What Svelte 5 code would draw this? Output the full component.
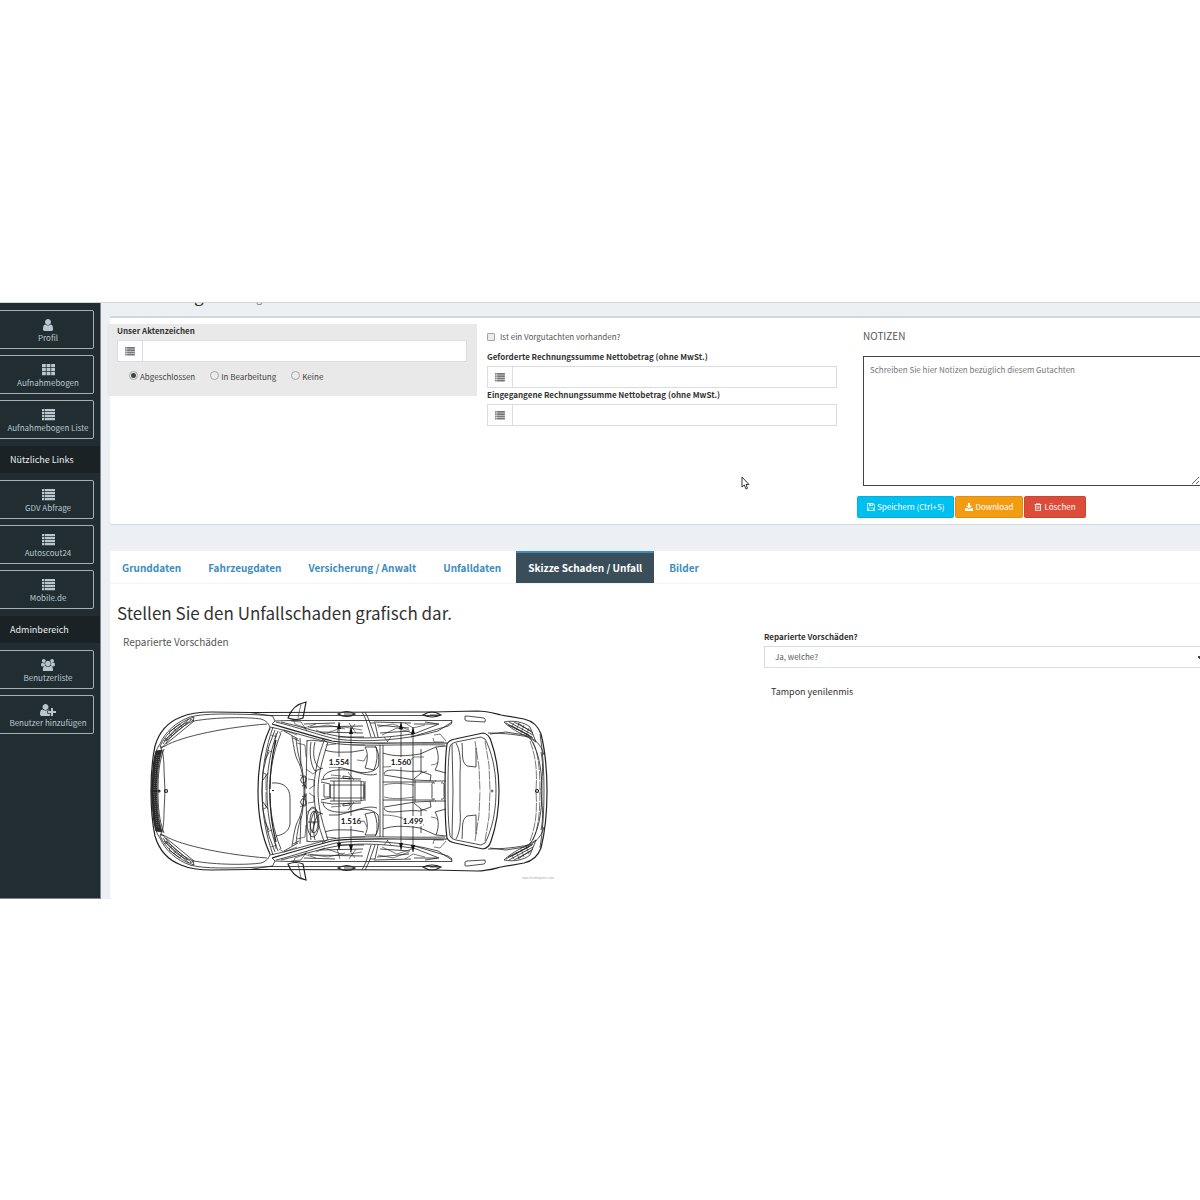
<script>
  let status = $state('done');
  let active = $state('Skizze Schaden / Unfall');

  const groups = [
    {
      title: '',
      items: [
        { icon: 'user', label: 'Profil' },
        { icon: 'grid', label: 'Aufnahmebogen' },
        { icon: 'list', label: 'Aufnahmebogen Liste' }
      ]
    },
    {
      title: 'Nützliche Links',
      items: [
        { icon: 'list', label: 'GDV Abfrage' },
        { icon: 'list', label: 'Autoscout24' },
        { icon: 'list', label: 'Mobile.de' }
      ]
    },
    {
      title: 'Adminbereich',
      items: [
        { icon: 'users', label: 'Benutzerliste' },
        { icon: 'plus', label: 'Benutzer hinzufügen' }
      ]
    }
  ];

  const tabs = [
    'Grunddaten',
    'Fahrzeugdaten',
    'Versicherung / Anwalt',
    'Unfalldaten',
    'Skizze Schaden / Unfall',
    'Bilder'
  ];

  const measures = [
    { x: 339, top: 722, bottom: 850, text: '1.554', y: 762 },
    { x: 351, top: 727, bottom: 852, text: '1.516', y: 821 },
    { x: 401, top: 722, bottom: 850, text: '1.560', y: 762 },
    { x: 413, top: 727, bottom: 852, text: '1.499', y: 821 }
  ];
</script>

{#snippet icon(name)}
  {#if name === 'user'}
    <svg class="icon" viewBox="0 128 1280 1536" aria-hidden="true"><path d="M1280 1399q0 109-62.500 187t-150.500 78h-854q-88 0-150.500-78t-62.500-187q0-85 8.500-160.500t31.500-152t58.500-131t94-89t134.500-34.500q131 128 313 128t313-128q76 0 134.500 34.500t94 89t58.500 131t31.500 152t8.500 160.500zM1024 512q0 159-112.500 271.500t-271.500 112.500t-271.500-112.500t-112.500-271.500t112.500-271.500t271.500-112.500t271.500 112.500t112.500 271.500z" /></svg>
  {:else if name === 'users'}
    <svg class="icon" viewBox="0 0 1920 1664" aria-hidden="true"><path d="M593 896q-162 5-265 128h-134q-82 0-138-40.500t-56-118.500q0-353 124-353 6 0 43.500 21t97.500 42.500 119 21.500q67 0 133-23-5 37-5 66 0 159 93 293zm1071 637q0 120-73 189.500t-194 69.500h-874q-121 0-194-69.500t-73-189.500q0-53 3.500-103.500t14-109 26.500-108.500 43-97.500 62-81 85.500-53.500 111.500-20q10 0 43 21.500t73 48 107 48 135 21.500 135-21.500 107-48 73-48 43-21.500q61 0 111.500 20t85.500 53.500 62 81 43 97.500 26.500 108.500 14 109 3.500 103.500zm-1024-1277q0 106-75 181t-181 75-181-75-75-181 75-181 181-75 181 75 75 181zm704 384q0 159-112.500 271.500t-271.500 112.500-271.500-112.500-112.500-271.500 112.500-271.500 271.500-112.500 271.500 112.500 112.500 271.500zm576 225q0 78-56 118.500t-138 40.500h-134q-103-123-265-128 93-134 93-293 0-29-5-66 66 23 133 23 59 0 119-21.500t97.500-42.500 43.500-21q124 0 124 353zm-128-609q0 106-75 181t-181 75-181-75-75-181 75-181 181-75 181 75 75 181z" /></svg>
  {:else if name === 'plus'}
    <svg class="icon" viewBox="0 128 2048 1536" aria-hidden="true"><path d="M704 896q-159 0-271.500-112.500t-112.500-271.500 112.500-271.500 271.500-112.500 271.500 112.500 112.500 271.500-112.500 271.500-271.500 112.500zm960 128h352q13 0 22.500 9.500t9.500 22.500v192q0 13-9.500 22.500t-22.500 9.500h-352v352q0 13-9.500 22.500t-22.500 9.500h-192q-13 0-22.500-9.500t-9.500-22.500v-352h-352q-13 0-22.500-9.500t-9.500-22.500v-192q0-13 9.500-22.500t22.500-9.500h352v-352q0-13 9.500-22.500t22.500-9.500h192q13 0 22.500 9.500t9.500 22.500v352zm-736 224q0 52 38 90t90 38h256v238q-68 50-171 50h-874q-121 0-194-69t-73-190q0-53 3.500-103.500t14-109 26.500-108.500 43-97.500 62-81 85.500-53.500 111.500-20q19 0 39 17 79 61 154.500 91.500t164.500 30.500 164.500-30.500 154.500-91.500q20-17 39-17 132 0 217 96h-223q-52 0-90 38t-38 90v192z" /></svg>
  {:else if name === 'grid'}
    <svg class="icon" viewBox="0 0 13 12" aria-hidden="true"><path d="M0 0h3.800v3.200H0zM4.600 0h3.800v3.200H4.600zM9.200 0H13v3.200H9.200zM0 4h3.800v3.200H0zM4.600 4h3.800v3.200H4.600zM9.200 4H13v3.200H9.200zM0 8h3.800v3.200H0zM4.600 8h3.800v3.200H4.600zM9.200 8H13v3.200H9.200z" /></svg>
  {:else if name === 'list'}
    <svg class="icon" viewBox="0 0 13 12" aria-hidden="true"><path d="M0 0h2v2.300H0zM2.600 0H13v2.300H2.600zM0 3h2v2.300H0zM2.600 3H13v2.300H2.600zM0 6h2v2.300H0zM2.600 6H13v2.300H2.600zM0 9h2v2.300H0zM2.600 9H13v2.300H2.600z" /></svg>
  {:else if name === 'save'}
    <svg class="icon" viewBox="0 0 12 12" aria-hidden="true"><path fill-rule="evenodd" d="M0 0h9l3 3v9H0zM1 1v10h1V7h8v4h1V3.500L8.500 1v3.500H3V1zM3 8v3h6V8zM5.500 1v2.500h1.700V1z" /></svg>
  {:else if name === 'download'}
    <svg class="icon" viewBox="0 0 12 12" aria-hidden="true"><path d="M4.500 0h3v4H10.500L6 8.500 1.500 4H4.500zM0 8h3.500L6 10.300 8.500 8H12v4H0z" /></svg>
  {:else}
    <svg class="icon" viewBox="0 0 12 12" aria-hidden="true"><path fill-rule="evenodd" d="M4 0h4l.6 1.600H11v1.200h-.8V12H1.800V2.800H1V1.600h2.400zM4.600.9 4.300 1.600h3.400L7.400.9zM3 3v7.800h6V3zM4 4h.8v5.500H4zM5.600 4h.8v5.500h-.8zM7.200 4H8v5.500h-.8z" /></svg>
  {/if}
{/snippet}

{#snippet halfCar()}
  <!-- body shell -->
  <path class="bold" d="M151 791C151 775 152 760 155 746C159 732 168 722 181 717C190 713 199 712 212 712L250 712.500L433 712L477 711C487 711 493 713 501 715L524 719C533 721 538 726 541 734C545 750 547 770 547 791" />
  <path d="M153 768C154 757 156 749 160 744C165 732 176 722 190 717C204 713 232 714 250 714.500L272 715.500L440 715.500" />
  <path d="M164 749C159 762 158 775 158 791M161 748C163 751 164 760 164 770L165 791M160 748L165 746M540 734C543 752 544 772 544 791" />
  <!-- bonnet -->
  <path d="M165 746C182 736 228 727 267 724M194 721C216 717 248 717 261 719C267 721 269 724 270 728M190 719L194 721L166 744M250 712.500L262 714.500L272 716" />
  <!-- head lamp -->
  <path d="M160 747C163 738 174 724 194 717L193 721C181 726 170 737 163 747ZM164 741L189 719M166 741L191 720M163 744C170 733 177 727 188 722M169 732L180 724" />
  <path class="thin" d="M165 738L168 740M169 733L172 736M174 728L176 731M180 724L182 727" />
  <!-- grille -->
  <path class="grille" d="M151.500 791C152 776 153 763 156 751L162 750C158 763 157 776 157 791Z" />
  <path class="slats" d="M154 790L157 754M156 790L159 754" />
  <!-- windscreen -->
  <path class="bold" d="M270 728C261 747 258 770 258 791" />
  <path d="M273 727C266 747 262 769 262 791M278 731C270 750 267 771 267 791M281 733C273 752 270 772 269.500 791M262 791L263 772L269 746L275 730M265 760L269 752M263 780L268 773" />
  <path class="bold" d="M276 740C272 755 270 768 270 789" />
  <path class="thin" d="M279 733L284 730L297 735M266 790V774L263 773M271 735L277 737M267 750L272 752M276 733L274 747" />
  <!-- pillar and roof rail -->
  <path class="bold" d="M272 724C289 729 316 737 332 741C356 745 402 742 447 743" />
  <path d="M270 727C290 731 314 739 332 743C356 747 402 744 445 745M276 722C297 727 318 735 336 739C366 743 405 740 438 731L452 722M281 722C300 726 318 733 337 736C362 740 392 737 412 734" />
  <path d="M272 715L275 721L289 720.500L452 720.500Q453 724 448 726L411 737M275 721L272 724" />
  <!-- mirror -->
  <path class="bold" d="M288 718C291 709 296 704 306 702L303 718Q296 721 288 718Z" />
  <path class="thin" d="M301 704L298 718M293 719L295 724L306 728M291 721L301 722L307 731" />
  <!-- doors and windows -->
  <path d="M362 712L366 720L371 737M365 712L369 720L375 737M304 724L335 723M310 727L363 726M320 732L363 733M374 722L411 723M377 725L409 728M380 733L410 731M370 723L375 723L378 737M425 722L439 724L411 735M414 724L437 724M338 737L364 737" />
  <path class="thin" d="M308 728L328 725L345 729M327 733L344 727L362 730M378 727L393 724L409 730M382 735L397 728L412 733M340 723L337 733M349 723L356 733M355 724L350 731M405 723L413 728L425 725M384 737L388 742M391 737L387 742M316 730L325 734M304 728L316 724" />
  <path class="bold" d="M338 714Q347 709 355 714Q347 719 338 714ZM423 715Q432 709 441 715Q432 719 423 715Z" />
  <path d="M344 714H353M430 715H439M465 717Q464 716 467 716L484 718Q486 719 485 722L467 721Q464 721 465 717Z" />
  <!-- dashboard -->
  <path d="M284 731L291 735L298 739M292 736C294 748 295 757 299 763C302 770 304 781 304 791M296 738C297 750 299 759 302 767L305 791M300 738L301 766M307 741C313 739 320 742 323 741M311 742C309 754 311 766 315 771L323 768M315 742C312 754 314 765 321 769M322 739L327 742M293 738L299 741M307 740L306 789" />
  <path class="thin" d="M297 743L305 745L306 757M306 769L313 774L317 771M308 779L314 780V786M309 789L315 785M300 775L306 778L305 787" />
  <path d="M302 777Q306 774 306 779T302 783Q299 780 302 777ZM302 786Q306 783 306 788" />
  <!-- front seats -->
  <path d="M328 742C323 758 318 773 318 791M324 741C319 754 314 772 314 791M325 750C333 753 340 752 352 752L364 750M329 767L338 767L354 771C363 774 373 773 378 767C380 757 378 750 375 746M323 779C324 771 335 769 348 770C358 772 368 777 377 774M365 747C369 754 367 763 365 768L374 770Q379 758 376 747Z" />
  <path d="M321 780L332 778L361 779M365 781V791M361 782Q364 780 364 784V791M330 781H361V791M343 776L350 777V779L343 778ZM334 781V791M321 782L330 784V791" />
  <path class="thin" d="M326 745L336 744M352 745L365 745M357 760L364 761L367 755M331 775L341 776M348 772L354 780" />
  <!-- rear bench -->
  <path d="M380 745V791M383 745V791M383 753C394 757 407 756 420 754L436 747L446 746M436 747C440 757 438 765 435 770L446 773M384 774C386 766 404 773 420 771L431 775L430 781M384 775L415 780L436 781M383 782L434 782M414 779L421 773V749M415 780V791M435 783Q431 782 432 786V791M441 783Q445 782 444 787V791M435 781H446" />
  <path class="thin" d="M383 767C396 767 409 763 414 757L424 757M421 773L427 771M384 785C395 782 406 784 414 785M431 765Q436 765 438 762M434 735L440 734L446 741M433 738L434 742L444 742" />
  <!-- rear window -->
  <path class="bold" d="M445 791C445 775 445 758 447 744Q449 740 455 739L483 733Q489 734 491 741C497 758 499 775 499 791" />
  <path d="M448 791C448 775 448 759 450 746Q451 743 456 742L481 737Q486 738 487 743C494 759 496 776 496 791M452 744L453 791M456 743C460 750 461 760 460 773V791M462 743C463 754 461 762 467 766L476 767V748" />
  <path class="thin" stroke-dasharray="9 1" d="M475 741L479 767L480 791M485 741L489 765L490 791" />
  <!-- boot -->
  <path d="M488 733C505 733 518 735 529 737C538 748 542 768 542 791M490 734L506 732L525 735C535 739 541 744 544 755M541 752C544 766 542 778 541 791" />
  <path class="thin" stroke-dasharray="9 1" d="M530 741C537 760 537 775 536 791M533 742C539 756 540 772 540 791" />
  <path d="M504 722C513 720 524 722 530 727L536 742C527 736 513 731 504 722ZM506 723L533 738M509 722L533 735M514 722L531 731M512 726L532 737M518 723L533 733M508 725L529 735" />
  <path class="thin" d="M514 723L511 727M519 724L516 730M524 725L521 733M529 728L526 736" />
{/snippet}

<div class="screen">
  <aside class="sidebar">
    {#each groups as group}
      {#if group.title}<h2>{group.title}</h2>{/if}
      <nav class="group" aria-label={group.title || 'Aufnahme'}>
        {#each group.items as item}
          <a class="tile" href="#top">{@render icon(item.icon)}<span>{item.label}</span></a>
        {/each}
      </nav>
    {/each}
  </aside>

  <main>
    <header><span class="big">g</span><span class="small">g</span></header>

    <section class="panel summary">
      <div class="columns">
        <div class="col file">
          <label class="title" for="file-no">Unser Aktenzeichen</label>
          <div class="field"><span>{@render icon('list')}</span><input id="file-no" type="text" /></div>
          <div class="choices">
            <label><input type="radio" name="status" value="done" bind:group={status} />Abgeschlossen</label>
            <label><input type="radio" name="status" value="open" bind:group={status} />In Bearbeitung</label>
            <label><input type="radio" name="status" value="none" bind:group={status} />Keine</label>
          </div>
        </div>

        <div class="col sums">
          <label class="check"><input type="checkbox" />Ist ein Vorgutachten vorhanden?</label>
          <label class="title" for="claimed">Geforderte Rechnungssumme Nettobetrag (ohne MwSt.)</label>
          <div class="field"><span>{@render icon('list')}</span><input id="claimed" type="text" /></div>
          <label class="title" for="received">Eingegangene Rechnungssumme Nettobetrag (ohne MwSt.)</label>
          <div class="field"><span>{@render icon('list')}</span><input id="received" type="text" /></div>
        </div>

        <div class="col notes">
          <label for="notes">NOTIZEN</label>
          <textarea id="notes" placeholder="Schreiben Sie hier Notizen bezüglich diesem Gutachten"></textarea>
          <div class="actions">
            <button class="save">{@render icon('save')}Speichern (Ctrl+S)</button>
            <button class="load">{@render icon('download')}Download</button>
            <button class="drop">{@render icon('trash')}Löschen</button>
          </div>
        </div>
      </div>

      <svg class="pointer" viewBox="0 0 9 14" aria-hidden="true"><path d="M1 1V11L3.300 9L5 13L6.500 12.300L5 8.500H8Z" /></svg>
    </section>

    <section class="panel">
      <nav class="tabs" aria-label="Gutachten">
        {#each tabs as tab}
          <a href="#top" class:active={tab === active} onclick={() => (active = tab)}>{tab}</a>
        {/each}
      </nav>
      <div class="sketch">
        <div class="drawing">
          <h1>Stellen Sie den Unfallschaden grafisch dar.</h1>
          <p>Reparierte Vorschäden</p>
          <svg class="car" viewBox="150 697 406 188" role="img" aria-label="Fahrzeug von oben">
            {@render halfCar()}
            <g transform="matrix(1 0 0 -1 0 1582)">{@render halfCar()}</g>
            <!-- steering wheel and instruments -->
            <ellipse cx="313" cy="822" rx="6" ry="15" />
            <ellipse cx="314" cy="822" rx="4" ry="11" />
            <path d="M308 822H318M314 811L315 821L312 833M272 783C284 782 290 788 290 798V824C289 832 282 835 276 836M324 784V797H329M330 785H364V798H330Z" />
            <circle cx="314" cy="823" r="1" />
            <!-- badges -->
            <circle class="bold" cx="166" cy="791" r="1.500" />
            <circle class="bold" cx="159" cy="791" r="1" />
            <circle cx="492" cy="791" r="1" />
            <circle class="bold" cx="537" cy="791" r="1.500" />
            <path class="dot" d="M272 790.500H274" />
            {#each measures as m}
              <path class="measure" d="M{m.x} {m.top}V{m.bottom}" />
              <path class="tip" d="M{m.x} {m.top}l-2 7h4zM{m.x} {m.bottom}l-2 -7h4z" />
            {/each}
            {#each measures as m}
              <rect class="mask" x={m.x - 10} y={m.y - 5} width="20" height="10" />
              <text class="value" x={m.x} y={m.y + 3}>{m.text}</text>
            {/each}
            <text class="source" x="522" y="879">www.the-blueprints.com</text>
          </svg>
        </div>
        <div class="details">
          <label class="title" for="damage">Reparierte Vorschäden?</label>
          <select id="damage"><option>Ja, welche?</option></select>
          <p>Tampon yenilenmis</p>
        </div>
      </div>
    </section>
  </main>
</div>

<style>
  :global(body) {
    background: #fff;
    font-family: 'Noto Sans CJK SC', 'Noto Sans', sans-serif;
    font-size: 8px;
    line-height: 12px;
    color: #444;
  }
  :global(#app) { padding: 302px 0; }
  * { box-sizing: border-box; }
  h1, h2, p { margin: 0; font-weight: 400; }
  input, textarea, select, button { font: inherit; margin: 0; }
  .icon { display: block; fill: currentColor; }

  .screen {
    display: flex;
    overflow: hidden;
    border-top: 1px solid #d5d6d8;
    background: #ecf0f5;
  }

  .sidebar {
    flex: none;
    width: 101px;
    background: #222d32;
    border-right: 1px solid #7f878d;
    border-bottom: 1px solid #7f878d;
  }
  .sidebar h2 {
    padding-left: 10px;
    background: #1a2226;
    color: #e8eef0;
    font-size: 9px;
    line-height: 27px;
  }
  .group {
    display: grid;
    gap: 6px;
    padding: 7px 6px 7px 0;
  }
  .tile {
    display: flex;
    flex-direction: column;
    align-items: center;
    gap: 1px;
    height: 39px;
    margin-left: -4px;
    padding: 8px 0 0 6px;
    border: 1px solid #a5b0b4;
    border-radius: 2px;
    color: #b8c7ce;
    text-decoration: none;
    white-space: nowrap;
  }
  .tile .icon { height: 12px; }

  main { flex: 1; min-width: 0; overflow: hidden; padding-left: 9px; }

  header {
    display: flex;
    align-items: flex-end;
    height: 13px;
    padding: 0 0 11px 84px;
    overflow: hidden;
    color: #333;
  }
  header .big { font-size: 17px; line-height: 21px; width: 62px; }
  header .small { font-size: 11px; line-height: 16px; color: #777; }

  .panel {
    margin-bottom: 27px;
    border-radius: 2px 0 0 2px;
    background: #fff;
    box-shadow: 0 1px 1px rgba(0, 0, 0, 0.1);
  }
  .panel:last-child { margin-bottom: 0; }
  .summary {
    position: relative;
    padding-top: 6px;
    border-top: 2px solid #d2d6de;
  }
  .columns {
    display: grid;
    grid-template-columns: repeat(3, 1fr);
    align-items: start;
    margin: 0 -17px 0 -3px;
  }
  .col { padding: 0 10px; min-width: 0; }
  .title { display: block; font-weight: 700; color: #333; }

  .file { height: 72px; background: #e9e9e9; }
  .file .title { padding: 1px 0 3px; }
  .field {
    display: flex;
    height: 22px;
    border: 1px solid #d9dce3;
    background: #fff;
  }
  .field span {
    display: grid;
    place-items: center;
    width: 25px;
    border-right: 1px solid #d9dce3;
    color: #777;
  }
  .field .icon { width: 10px; height: 9px; }
  .field input { flex: 1; min-width: 0; padding: 0 8px; border: 0; background: none; }
  .choices { display: flex; gap: 15px; padding: 9px 0 0 12px; }
  .choices label { display: flex; gap: 2px; }
  input[type='radio'], input[type='checkbox'] {
    appearance: none;
    flex: none;
    width: 9px;
    height: 9px;
    border: 1px solid #a5a5a5;
    background: #ececec;
  }
  input[type='radio'] { border-radius: 50%; }
  input[type='radio']:checked { background: radial-gradient(circle, #444 0 2px, #ececec 3px); }
  input[type='checkbox'] { width: 8px; height: 8px; border-radius: 1px; }

  .sums .title { padding-bottom: 2px; line-height: 14px; }
  .check { display: flex; align-items: center; gap: 5px; height: 26px; color: #555; }

  .notes { padding: 0 16px; }
  .notes label { display: block; font-size: 10px; line-height: 24px; color: #555; }
  .notes textarea {
    display: block;
    width: 100%;
    height: 130px;
    margin-top: 8px;
    padding: 7px 6px;
    border: 1px solid #444;
    background: #fff;
  }
  .notes textarea::placeholder { color: #777; }
  .actions { display: flex; gap: 1px; margin: 10px 0 6px -6px; }
  .actions button {
    display: flex;
    align-items: center;
    gap: 2px;
    height: 22px;
    padding: 0 9px;
    border: 1px solid rgba(0, 0, 0, 0.08);
    border-radius: 2px;
    color: #fff;
    white-space: nowrap;
  }
  .actions .icon { width: 8px; height: 8px; }
  .save { background: #00c0ef; }
  .load { background: #f39c12; }
  .drop { background: #dd4b39; }

  .pointer { position: absolute; left: 631px; top: 158px; width: 9px; height: 14px; fill: #fff; stroke: #333; }

  .tabs { display: flex; gap: 3px; border-bottom: 1px solid #f4f4f4; }
  .tabs a {
    padding: 0 12px;
    border-top: 2px solid transparent;
    color: #3c8dbc;
    font-size: 10px;
    font-weight: 700;
    line-height: 30px;
    text-decoration: none;
    white-space: nowrap;
  }
  .tabs a.active { border-color: #3c8dbc; background: #3a4e5a; color: #fff; }

  .sketch {
    display: grid;
    grid-template-columns: 647px 1fr;
    padding-left: 7px;
  }
  .drawing h1 { padding-top: 15px; font-size: 17px; line-height: 28px; color: #333; }
  .drawing p { padding: 6px 6px 4px; font-size: 10px; line-height: 18px; color: #555; }
  .car {
    display: block;
    width: 406px;
    margin: 42px 0 14px 33px;
    fill: none;
    stroke: #222;
    stroke-width: 0.8;
  }
  .car .bold { stroke-width: 1.2; }
  .car .thin { stroke-width: 0.6; }
  .car .grille { fill: #2b2b2b; stroke-width: 0.8; }
  .car .slats { stroke: #777; stroke-width: 0.8; stroke-dasharray: 1 1; }
  .car .dot { stroke-width: 1; }
  .car .measure { stroke-width: 0.8; }
  .car .tip { fill: #111; stroke: none; }
  .car .mask { fill: #fff; stroke: none; }
  .car .value { fill: #111; stroke: none; font: 700 8px Lato, sans-serif; text-anchor: middle; }
  .car .source { fill: #aaa; stroke: none; font: 3px 'Liberation Sans', sans-serif; }

  .details { padding-top: 46px; margin-right: -7px; }
  .details .title { padding-bottom: 2px; line-height: 14px; }
  .details select {
    display: block;
    appearance: none;
    width: 100%;
    height: 22px;
    padding: 0 10px;
    border: 1px solid #d9dce3;
    border-radius: 0;
    background:
      linear-gradient(45deg, transparent 50%, #444 50%) right 6px top 9px / 3px 3px no-repeat,
      linear-gradient(-45deg, transparent 50%, #444 50%) right 3px top 9px / 3px 3px no-repeat,
      #fff;
    color: #555;
  }
  .details p { padding: 16px 7px; font-size: 9px; line-height: 16px; color: #333; }
</style>
